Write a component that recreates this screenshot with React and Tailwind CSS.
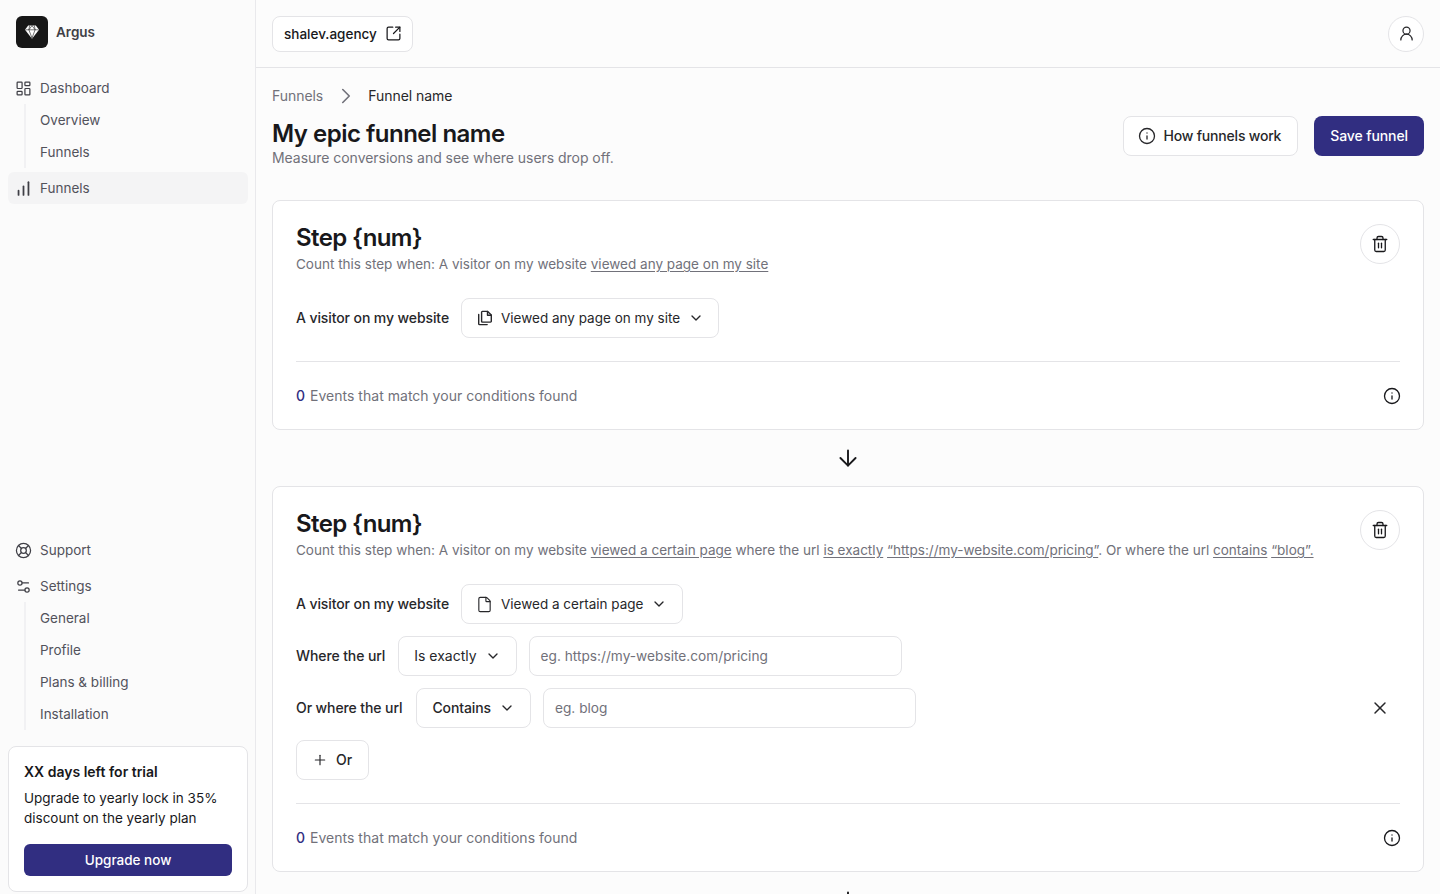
import {
  ArrowDown,
  ChartNoAxesColumnIncreasing,
  ChevronDown,
  ChevronRight,
  File,
  Info,
  LayoutDashboard,
  LifeBuoy,
  Plus,
  Settings2,
  SquareArrowOutUpRight,
  Trash2,
  UserRound,
  X,
} from 'lucide-react'

function GemLogo() {
  return (
    <svg width="16" height="16" viewBox="0 0 16 16" fill="none">
      <path d="M4.2 1.4h7.6L15 5.8 8 14.8 1 5.8z" fill="white" />
      <path d="M1.5 5.8h13M5.6 1.6 4.9 5.8 8 14M10.4 1.6l.7 4.2L8 14M8 1.6 4.9 5.8M8 1.6l3.1 4.2" stroke="#171717" strokeWidth="0.6" />
    </svg>
  )
}

function CopyPage() {
  return (
    <svg width="16" height="16" viewBox="0 0 16 16" fill="none" stroke="currentColor" strokeWidth="1.4" strokeLinejoin="round" strokeLinecap="round">
      <path d="M5.4 1.4h5.3l3.6 3.6v6.3a.8.8 0 0 1-.8.8H5.4a.8.8 0 0 1-.8-.8V2.2a.8.8 0 0 1 .8-.8z" />
      <path d="M10.5 1.5v3.7h3.7" />
      <path d="M1.7 4.4v9.3c0 .5.4.9.9.9h7.6" />
    </svg>
  )
}

function NavItem({ icon: Icon, label, active, stroke = 1.75 }) {
  return (
    <div className={`flex h-8 items-center gap-2 rounded-md px-2 text-[13.5px] text-[#52525b] ${active ? 'bg-[#f4f4f5]' : ''}`}>
      <Icon size={17} strokeWidth={stroke} className="-ml-px text-[#3f3f46]" />
      <span>{label}</span>
    </div>
  )
}

function SubNav({ items }) {
  return (
    <div className="ml-4 border-l-2 border-[#f1f1f3] pl-[14px]">
      {items.map(item => (
        <div key={item} className="flex h-8 items-center text-[13.5px] text-[#52525b]">{item}</div>
      ))}
    </div>
  )
}

function Select({ icon, label, className = '' }) {
  return (
    <div className={`flex h-10 items-center gap-2 rounded-lg border border-[#e4e4e7] bg-white px-[15px] text-[#27272a] ${className}`}>
      {icon}
      <span>{label}</span>
      <ChevronDown size={16} strokeWidth={2} />
    </div>
  )
}

function Field({ placeholder }) {
  return (
    <div className="flex h-10 w-[373px] items-center rounded-lg border border-[#e4e4e7] bg-white px-[11px] text-[13.7px] leading-5 font-normal tracking-normal text-[#71717a]">
      {placeholder}
    </div>
  )
}

function StepFooter() {
  return (
    <div className="flex items-center justify-between border-t border-[#e4e4e7] pt-6 text-sm">
      <p className="tracking-[0.02px] text-[#71717a]">
        <span className="mr-px font-medium text-[#312e81]">0</span> Events that match your conditions found
      </p>
      <Info size={18} strokeWidth={1.75} className="-mr-px text-[#18181b]" />
    </div>
  )
}

function StepHeader({ children }) {
  return (
    <div className="flex items-start justify-between">
      <div>
        <h2 className="text-2xl leading-8 font-semibold tracking-[-0.6px] text-[#18181b]">{'Step {num}'}</h2>
        <p className="text-[13.52px] leading-5 text-[#71717a]">{children}</p>
      </div>
      <button className="mt-[2px] flex h-10 w-10 items-center justify-center rounded-full border border-[#e4e4e7] bg-white text-[#18181b]">
        <Trash2 size={18} strokeWidth={1.75} />
      </button>
    </div>
  )
}

function Hl({ children }) {
  return <span className="underline underline-offset-2">{children}</span>
}

export default function App() {
  return (
    <div className="flex h-screen overflow-hidden bg-[#fcfcfc] font-['Inter',sans-serif]">
      {/* Sidebar */}
      <aside className="flex w-64 shrink-0 flex-col border-r border-[#e9e9ec] bg-[#fbfbfb] pb-[2px] pl-2 pr-[7px]">
        <div className="flex items-center gap-2 px-2 pt-4">
          <div className="flex h-8 w-8 items-center justify-center rounded-md bg-[#171717]">
            <GemLogo />
          </div>
          <span className="text-[13.5px] font-semibold text-[#3f3f46]">Argus</span>
        </div>

        <div className="mt-6">
          <NavItem icon={LayoutDashboard} label="Dashboard" />
          <SubNav items={['Overview', 'Funnels']} />
          <div className="mt-1">
            <NavItem icon={ChartNoAxesColumnIncreasing} label="Funnels" active stroke={2.5} />
          </div>
        </div>

        <div className="mt-auto">
          <NavItem icon={LifeBuoy} label="Support" />
          <div className="mt-1">
            <NavItem icon={Settings2} label="Settings" />
          </div>
          <SubNav items={['General', 'Profile', 'Plans & billing', 'Installation']} />
        </div>

        <div className="mt-4 rounded-lg border border-[#e4e4e7] bg-white p-[15px] text-[#18181b]">
          <p className="text-sm font-semibold">XX days left for trial</p>
          <p className="mt-[6px] text-[13.5px] leading-5">Upgrade to yearly lock in 35% discount on the yearly plan</p>
          <button className="mt-4 h-8 w-full rounded-md bg-[#312e81] text-[13.5px] font-medium text-white">Upgrade now</button>
        </div>
      </aside>

      <div className="flex min-w-0 flex-1 flex-col">
        {/* Top bar */}
        <header className="flex h-[68px] shrink-0 items-center justify-between border-b border-[#e4e4e7] px-4">
          <div className="flex h-9 items-center gap-2 rounded-lg border border-[#e4e4e7] bg-white pl-[11px] pr-[10px] text-[13.5px] leading-5 font-medium text-[#18181b]">
            shalev.agency
            <SquareArrowOutUpRight size={17} strokeWidth={1.75} />
          </div>
          <div className="flex h-9 w-9 items-center justify-center rounded-full border border-[#e4e4e7] bg-white text-[#27272a]">
            <UserRound size={17} strokeWidth={1.75} />
          </div>
        </header>

        <main className="flex-1 overflow-hidden px-4 pt-4">
          <div className="flex h-6 items-center text-sm tracking-[-0.05px]">
            <span className="text-[#71717a]">Funnels</span>
            <ChevronRight size={26} strokeWidth={1.5} className="ml-[10px] mr-[9px] text-[#71717a]" />
            <span className="text-[#27272a]">Funnel name</span>
          </div>

          <div className="mt-2 flex items-start justify-between">
            <div className="pt-[2px]">
              <h1 className="text-2xl leading-8 font-semibold tracking-[-0.5px] text-[#18181b]">My epic funnel name</h1>
              <p className="text-sm leading-4 tracking-[-0.04px] text-[#71717a]">Measure conversions and see where users drop off.</p>
            </div>
            <div className="flex gap-4">
              <button className="flex h-10 items-center gap-2 rounded-lg border border-[#e4e4e7] bg-white px-4 text-sm font-medium tracking-[-0.2px] text-[#27272a]">
                <Info size={18} strokeWidth={1.75} className="-ml-[2px]" />
                How funnels work
              </button>
              <button className="h-10 rounded-lg bg-[#312e81] px-4 text-sm font-medium tracking-[-0.1px] text-white">Save funnel</button>
            </div>
          </div>

          {/* Step 1 */}
          <section className="mt-[34px] rounded-lg border border-[#e4e4e7] bg-white p-[23px] pt-[21px]">
            <StepHeader>
              Count this step when: A visitor on my website <Hl>viewed any page on my site</Hl>
            </StepHeader>
            <div className="mt-6 flex items-center gap-3 text-sm font-medium tracking-[-0.1px] text-[#27272a]">
              A visitor on my website
              <Select icon={<CopyPage />} label="Viewed any page on my site" className="pr-[14px] text-[13.5px] leading-5 font-normal tracking-normal" />
            </div>
            <div className="mt-[23px]">
              <StepFooter />
            </div>
          </section>

          <div className="flex h-14 items-center justify-center text-[#18181b]">
            <ArrowDown size={26} strokeWidth={1.75} />
          </div>

          {/* Step 2 */}
          <section className="rounded-lg border border-[#e4e4e7] bg-white p-[23px] pt-[21px]">
            <StepHeader>
              Count this step when: A visitor on my website <Hl>viewed a certain page</Hl> where the url <Hl>is exactly</Hl> <Hl>“https://my-website.com/pricing”</Hl>. Or where the url <Hl>contains</Hl> <Hl>“blog”.</Hl>
            </StepHeader>

            <div className="mt-6 flex flex-col gap-3 text-sm font-medium tracking-[-0.1px] text-[#27272a]">
              <div className="flex items-center gap-3">
                A visitor on my website
                <Select icon={<File size={17} strokeWidth={1.6} className="-ml-px" />} label="Viewed a certain page" className="text-[13.5px] leading-5 font-normal tracking-normal" />
              </div>
              <div className="flex items-center gap-3">
                <span className="mr-px">Where the url</span>
                <Select label="Is exactly" className="text-sm font-normal tracking-normal" />
                <Field placeholder="eg. https://my-website.com/pricing" />
              </div>
              <div className="flex items-center justify-between pr-[10px]">
                <div className="flex items-center gap-3">
                  <span className="mr-[2px]">Or where the url</span>
                  <Select label="Contains" />
                  <Field placeholder="eg. blog" />
                </div>
                <X size={20} strokeWidth={1.75} />
              </div>
              <button className="flex h-10 w-fit items-center gap-2 rounded-lg border border-[#e4e4e7] bg-white pl-[15px] pr-4 text-sm font-medium tracking-normal">
                <Plus size={16} strokeWidth={1.75} />
                Or
              </button>
            </div>

            <div className="mt-[23px]">
              <StepFooter />
            </div>
          </section>

          <div className="flex h-14 items-center justify-center text-[#18181b]">
            <ArrowDown size={26} strokeWidth={1.75} />
          </div>
        </main>
      </div>
    </div>
  )
}
